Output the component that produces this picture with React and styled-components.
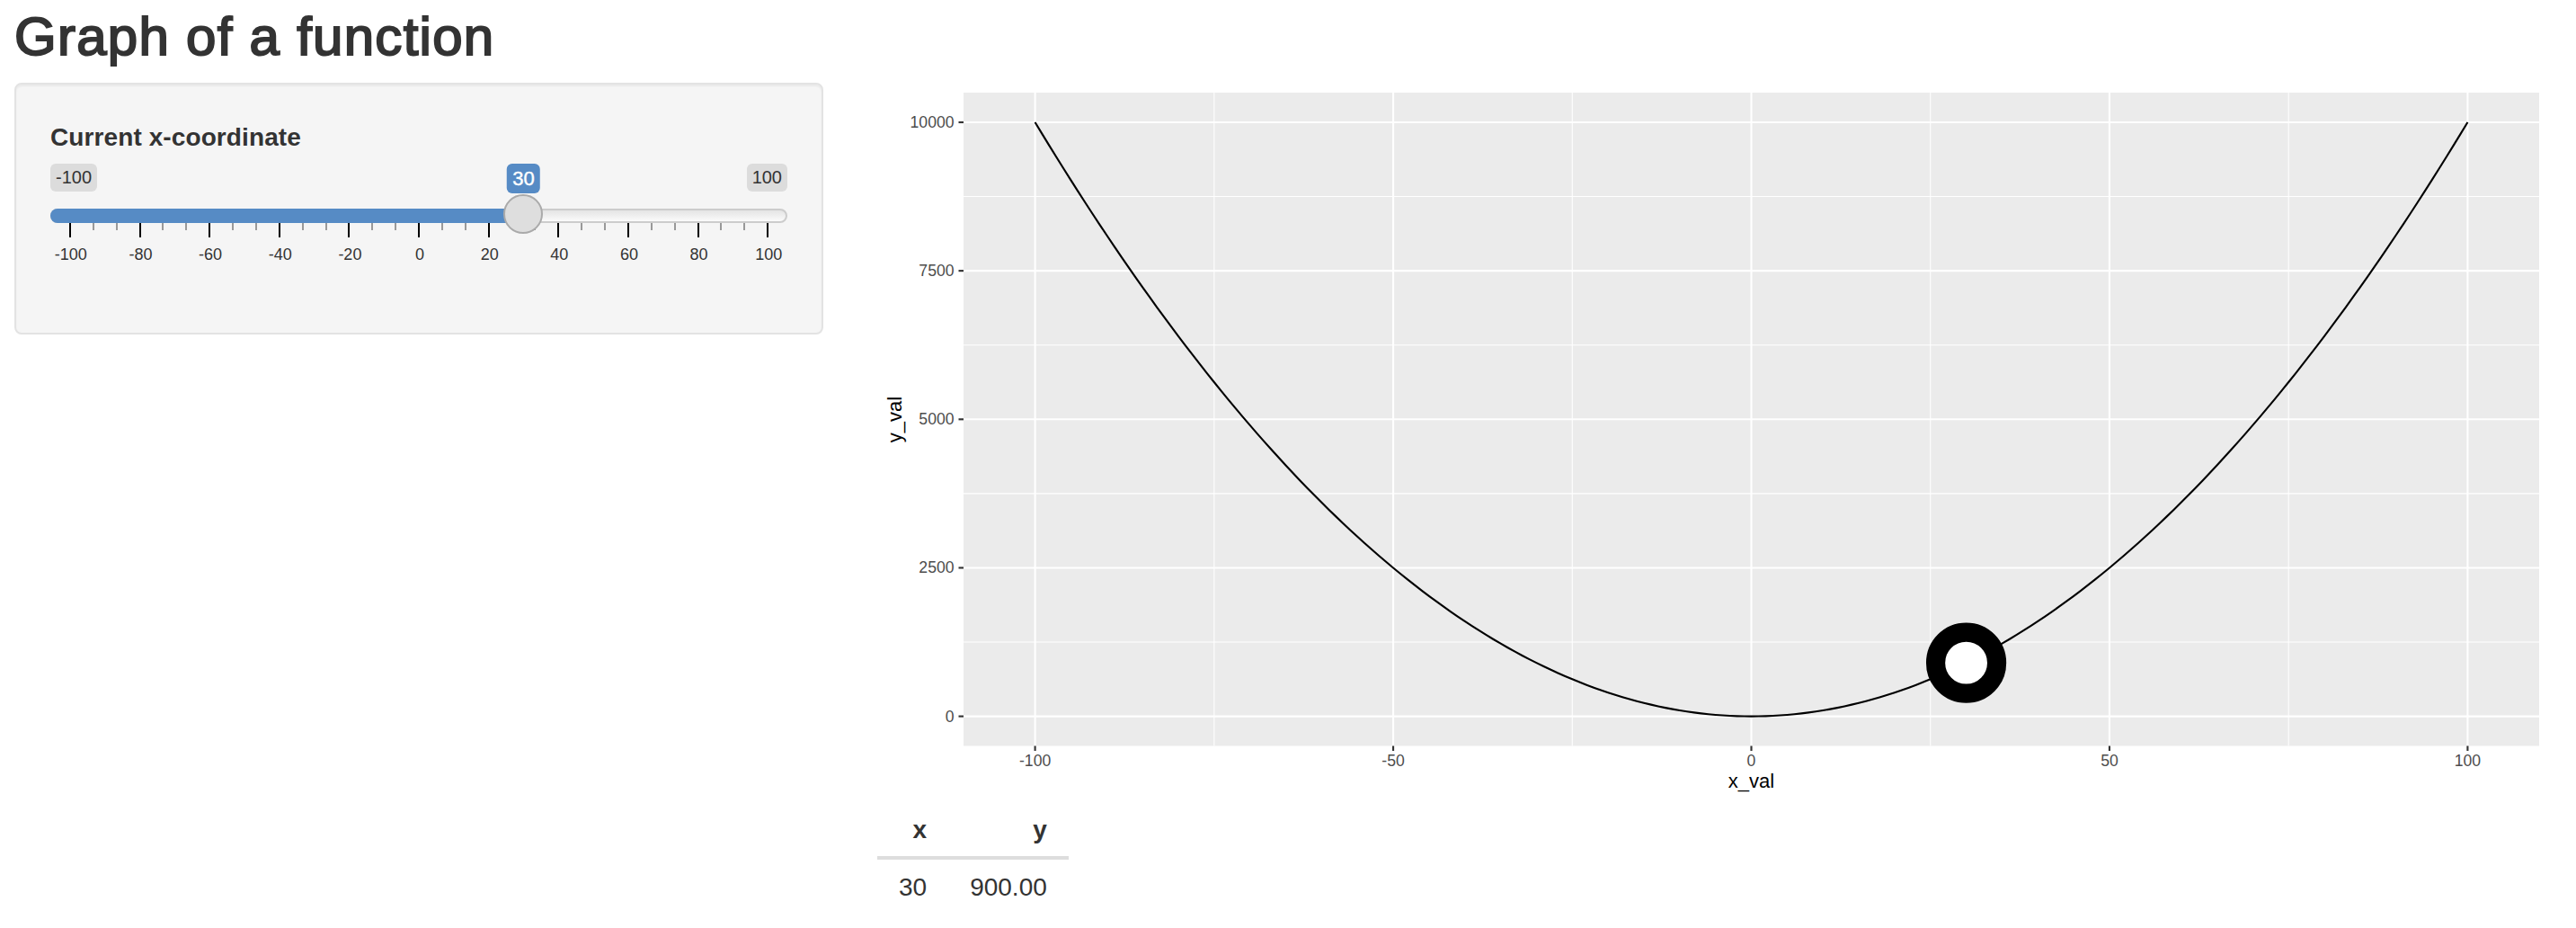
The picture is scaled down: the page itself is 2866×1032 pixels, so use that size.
import React from "react";
import styled, { createGlobalStyle } from "styled-components";

const GlobalStyle = createGlobalStyle`
  * { box-sizing: border-box; }
  body {
    margin: 0;
    background: #fff;
    color: #333;
    font-family: "Liberation Sans", Arial, sans-serif;
    font-size: 28px;
    line-height: 40px;
  }
`;

const Page = styled.main`
  height: 1032px;
  padding: 8px 30px 0 16px;
  overflow: hidden;
`;

const Title = styled.h2`
  margin: 0 0 18px;
  font-size: 60px;
  font-weight: 400;
  line-height: 66px;
  letter-spacing: 1.27px;
  -webkit-text-stroke: 2px #333;
`;

const Columns = styled.div`
  display: flex;
  align-items: flex-start;
  gap: 60px;
`;

const Well = styled.form`
  width: 900px;
  height: 280px;
  padding: 38px;
  background: #f5f5f5;
  border: 2px solid #e3e3e3;
  border-radius: 8px;
  box-shadow: inset 0 2px 2px rgba(0, 0, 0, 0.05);
`;

const Label = styled.label`
  display: block;
  height: 40px;
  margin-bottom: 10px;
  font-weight: 700;
  line-height: 42px;
  letter-spacing: 0.1px;
`;

const Slider = styled.div`
  position: relative;
`;

const Limits = styled.div`
  display: flex;
  justify-content: space-between;
  align-items: flex-start;
  height: 50px;
`;

const Badge = styled.span`
  height: 31px;
  padding: 2px 6px 0;
  border-radius: 6px;
  background: #dcdcdc;
  font-size: 20px;
  line-height: 27px;
`;

const ValueBadge = styled(Badge)`
  position: absolute;
  top: 0;
  transform: translateX(-50%);
  height: 33px;
  background: #568bc5;
  color: #fff;
  font-size: 22px;
  line-height: 29px;
  -webkit-text-stroke: 0.4px #fff;
`;

const Track = styled.div`
  height: 16px;
  border: 2px solid #ccc;
  border-radius: 16px;
  background: linear-gradient(to bottom, #e4e4e4, #fbfbfb);
`;

const Fill = styled.div`
  height: 16px;
  margin: -2px;
  border-radius: 16px 0 0 16px;
  background: #568bc5;
`;

const Thumb = styled.div`
  position: absolute;
  top: 34px;
  width: 44px;
  height: 44px;
  transform: translateX(-50%);
  border: 2px solid #aaa;
  border-radius: 50%;
  background: #dedede;
`;

const Ticks = styled.div`
  display: flex;
  height: 16px;
  padding: 0 9px;
`;

const TickCell = styled.div`
  flex: 1;
  display: flex;
  justify-content: center;
`;

const Tick = styled.i`
  width: 2px;
  height: ${(p) => (p.$major ? 16 : 8)}px;
  background: ${(p) => (p.$major ? "#000" : "#999")};
`;

const TickLabels = styled.div`
  display: flex;
  margin: 8px -18px 0 -16px;
  font-size: 18px;
  line-height: 22px;
`;

const TickLabel = styled.span`
  flex: 1;
  text-align: center;
`;

const Main = styled.section`
  width: 1860px;
`;

const Chart = styled.svg`
  display: block;
  width: 1860px;
  height: 800px;
  font-family: "Liberation Sans", Arial, sans-serif;
`;

const AxisText = styled.text`
  font-size: 17.6px;
  fill: #4d4d4d;
  text-anchor: ${(p) => p.$anchor};
`;

const AxisTitle = styled.text`
  font-size: 22px;
  fill: #000;
  text-anchor: middle;
`;

const Table = styled.table`
  margin-top: 11px;
  border-collapse: separate;
  border-spacing: 0;
  line-height: 40px;
`;

const Th = styled.th`
  height: 53px;
  padding: 0 24px;
  border-bottom: 4px solid #ddd;
  text-align: right;
  vertical-align: top;
`;

const Td = styled.td`
  padding: 11px 24px;
  text-align: right;
`;

const MIN = -100;
const MAX = 100;
const VALUE = 30;

const PANEL = { left: 96, top: 11, right: 1849, bottom: 737.5 };
const sx = (x) => 972.5 + x * 7.969;
const sy = (y) => 704.6 - y * 0.06606;

const xMajor = [-100, -50, 0, 50, 100];
const xMinor = [-75, -25, 25, 75];
const yMajor = [0, 2500, 5000, 7500, 10000];
const yMinor = [1250, 3750, 6250, 8750];

const curve = Array.from({ length: 201 }, (_, i) => i - 100)
  .map((x) => `${sx(x).toFixed(2)},${sy(x * x).toFixed(2)}`)
  .join(" ");

function SliderInput() {
  const pos = 22 + ((VALUE - MIN) / (MAX - MIN)) * 776;
  return (
    <Slider>
      <Limits>
        <Badge>{MIN}</Badge>
        <Badge>{MAX}</Badge>
      </Limits>
      <ValueBadge style={{ left: pos }}>{VALUE}</ValueBadge>
      <Track>
        <Fill style={{ width: pos }} />
      </Track>
      <Ticks>
        {Array.from({ length: 31 }, (_, i) => (
          <TickCell key={i}>
            <Tick $major={i % 3 === 0} />
          </TickCell>
        ))}
      </Ticks>
      <TickLabels>
        {Array.from({ length: 11 }, (_, i) => (
          <TickLabel key={i}>{MIN + i * 20}</TickLabel>
        ))}
      </TickLabels>
      <Thumb style={{ left: pos }} />
    </Slider>
  );
}

function Plot() {
  const { left, top, right, bottom } = PANEL;
  return (
    <Chart viewBox="0 0 1860 800">
      <rect x={left} y={top} width={right - left} height={bottom - top} fill="#ebebeb" />
      <g stroke="#fff" strokeWidth="1.07">
        {xMinor.map((x) => (
          <line key={x} x1={sx(x)} x2={sx(x)} y1={top} y2={bottom} />
        ))}
        {yMinor.map((y) => (
          <line key={y} x1={left} x2={right} y1={sy(y)} y2={sy(y)} />
        ))}
      </g>
      <g stroke="#fff" strokeWidth="2.13">
        {xMajor.map((x) => (
          <line key={x} x1={sx(x)} x2={sx(x)} y1={top} y2={bottom} />
        ))}
        {yMajor.map((y) => (
          <line key={y} x1={left} x2={right} y1={sy(y)} y2={sy(y)} />
        ))}
      </g>
      <polyline points={curve} fill="none" stroke="#000" strokeWidth="2.13" />
      <circle cx={sx(VALUE)} cy={sy(VALUE * VALUE)} r="34" fill="#fff" stroke="#000" strokeWidth="21.2" />
      <g stroke="#333" strokeWidth="2.13">
        {xMajor.map((x) => (
          <line key={x} x1={sx(x)} x2={sx(x)} y1={bottom} y2={bottom + 5.5} />
        ))}
        {yMajor.map((y) => (
          <line key={y} x1={left - 5.5} x2={left} y1={sy(y)} y2={sy(y)} />
        ))}
      </g>
      {yMajor.map((y) => (
        <AxisText key={y} $anchor="end" x={85.5} y={sy(y) + 6}>
          {y}
        </AxisText>
      ))}
      {xMajor.map((x) => (
        <AxisText key={x} $anchor="middle" x={sx(x)} y={760}>
          {x}
        </AxisText>
      ))}
      <AxisTitle x={972.5} y={784}>x_val</AxisTitle>
      <AxisTitle transform="translate(27.3 374.5) rotate(-90)">y_val</AxisTitle>
    </Chart>
  );
}

export default function App() {
  return (
    <Page>
      <GlobalStyle />
      <Title>Graph of a function</Title>
      <Columns>
        <Well>
          <Label>Current x-coordinate</Label>
          <SliderInput />
        </Well>
        <Main>
          <Plot />
          <Table>
            <thead>
              <tr>
                <Th>x</Th>
                <Th>y</Th>
              </tr>
            </thead>
            <tbody>
              <tr>
                <Td>{VALUE}</Td>
                <Td>{(VALUE * VALUE).toFixed(2)}</Td>
              </tr>
            </tbody>
          </Table>
        </Main>
      </Columns>
    </Page>
  );
}
